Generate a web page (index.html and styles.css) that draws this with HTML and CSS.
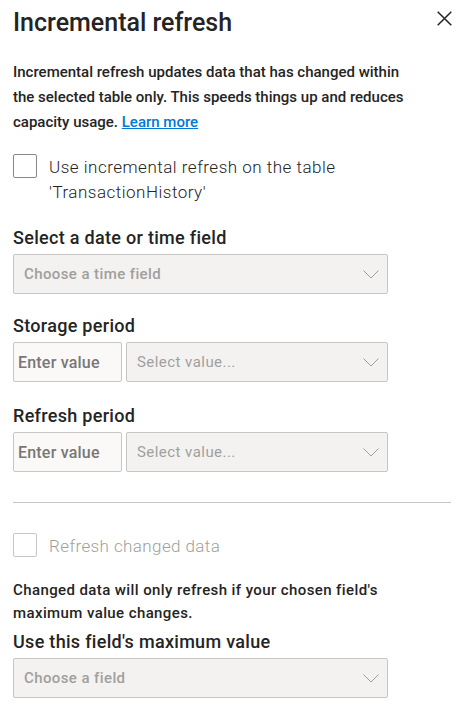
FILE: index.html
```html
<!DOCTYPE html>
<html>
<head>
<meta charset="utf-8">
<link rel="stylesheet" href="styles.css">
</head>
<body>
<div class="panel">
  <div class="header">
    <h1 class="title">Incremental refresh</h1>
    <button class="close" aria-label="Close">
      <svg width="15" height="15" viewBox="0 0 15 15"><path d="M0.7 0.7 L14.3 14.3 M14.3 0.7 L0.7 14.3" stroke="#252423" stroke-width="1.5" fill="none"/></svg>
    </button>
  </div>
  <p class="desc">Incremental refresh updates data that has changed within<br>the selected table only. This speeds things up and reduces<br>capacity usage. <a class="link" href="#">Learn more</a></p>

  <label class="check main-check">
    <span class="box"></span>
    <span class="check-label">Use incremental refresh on the table 'TransactionHistory'</span>
  </label>

  <div class="field f-date">
    <div class="field-label">Select a date or time field</div>
    <div class="select wide"><span class="ph strong">Choose a time field</span><svg class="chev" width="16" height="9" viewBox="0 0 16 9"><path d="M0.5 0.5 L8 8 L15.5 0.5" stroke="#a19f9d" stroke-width="1" fill="none"/></svg></div>
  </div>

  <div class="field f-storage">
    <div class="field-label">Storage period</div>
    <div class="pair">
      <div class="input"><span>Enter value</span></div>
      <div class="select grow"><span class="ph light">Select value...</span><svg class="chev" width="16" height="9" viewBox="0 0 16 9"><path d="M0.5 0.5 L8 8 L15.5 0.5" stroke="#a19f9d" stroke-width="1" fill="none"/></svg></div>
    </div>
  </div>

  <div class="field f-refresh">
    <div class="field-label">Refresh period</div>
    <div class="pair">
      <div class="input"><span>Enter value</span></div>
      <div class="select grow"><span class="ph light">Select value...</span><svg class="chev" width="16" height="9" viewBox="0 0 16 9"><path d="M0.5 0.5 L8 8 L15.5 0.5" stroke="#a19f9d" stroke-width="1" fill="none"/></svg></div>
    </div>
  </div>

  <hr class="divider">

  <label class="check disabled">
    <span class="box"></span>
    <span class="check-label">Refresh changed data</span>
  </label>

  <p class="desc small">Changed data will only refresh if your chosen field's<br>maximum value changes.</p>

  <div class="field f-max">
    <div class="field-label">Use this field's maximum value</div>
    <div class="select wide"><span class="ph strong">Choose a field</span><svg class="chev" width="16" height="9" viewBox="0 0 16 9"><path d="M0.5 0.5 L8 8 L15.5 0.5" stroke="#a19f9d" stroke-width="1" fill="none"/></svg></div>
  </div>
</div>
</body>
</html>
```
FILE: styles.css
```css
* { box-sizing: border-box; }
html, body { margin: 0; padding: 0; background: #ffffff; }
body {
  font-family: Roboto, "Noto Sans", sans-serif;
  color: #252423;
  width: 468px;
  height: 710px;
  overflow: hidden;
}
.panel {
  padding: 0 17px 0 13px;
  display: flex;
  flex-direction: column;
}
.header {
  display: flex;
  justify-content: space-between;
  align-items: flex-start;
}
.title {
  margin: 7px 0 0 0;
  font-size: 25px;
  font-weight: 500;
  line-height: 32px;
}
.close {
  border: none;
  background: none;
  padding: 0;
  margin: 11px -1px 0 0;
  width: 15px;
  height: 15px;
  cursor: pointer;
}
.close svg { display: block; }
.desc {
  margin: 21px 0 0 0;
  font-size: 15px;
  font-weight: 500;
  line-height: 25px;
}
.link {
  color: #0078d4;
  text-decoration: underline;
}
.check {
  display: flex;
  align-items: flex-start;
  gap: 12px;
}
.main-check { margin-top: 19px; }
.box {
  flex: none;
  width: 24px;
  height: 24px;
  border: 1px solid #8a8886;
  border-radius: 2px;
  background: #fff;
}
.check-label {
  font-size: 17px;
  font-weight: 300;
  letter-spacing: 0.5px;
  line-height: 25px;
  margin-top: 1px;
}
.check.disabled { margin-top: 30px; }
.check.disabled .box { border-color: #c8c6c4; }
.check.disabled .check-label { color: #a19f9d; letter-spacing: 0.4px; }
.field { display: flex; flex-direction: column; }
.f-date { margin-top: 22px; }
.f-storage { margin-top: 21px; }
.f-refresh { margin-top: 23px; }
.f-max { margin-top: 6px; }
.field-label {
  font-size: 18px;
  font-weight: 500;
  letter-spacing: 0.3px;
  line-height: 22px;
  margin-bottom: 5px;
}
.select {
  height: 40px;
  background: #f3f2f1;
  border: 1px solid #c8c6c4;
  border-radius: 2px;
  display: flex;
  align-items: center;
  justify-content: space-between;
  padding: 0 8px 0 10px;
}
.select.wide { width: 375px; }
.pair { display: flex; gap: 4px; width: 375px; }
.input {
  width: 109px;
  height: 40px;
  border: 1px solid #c8c6c4;
  border-radius: 2px;
  background: #faf9f8;
  display: flex;
  align-items: center;
  padding: 0 4px;
  font-size: 16px;
  font-weight: 500;
  letter-spacing: 0.2px;
  color: #797775;
}
.select.grow { flex: 1; }
.ph { font-size: 15px; color: #a19f9d; }
.ph.strong { font-weight: 500; letter-spacing: 0.4px; }
.ph.light { font-weight: 400; letter-spacing: 0.45px; }
.chev { display: block; flex: none; }
.divider {
  border: none;
  border-top: 1px solid #c8c6c4;
  margin: 30px 0 0 0;
  height: 0;
}
.desc.small { margin-top: 20px; line-height: 23px; letter-spacing: 0.4px; }
```
